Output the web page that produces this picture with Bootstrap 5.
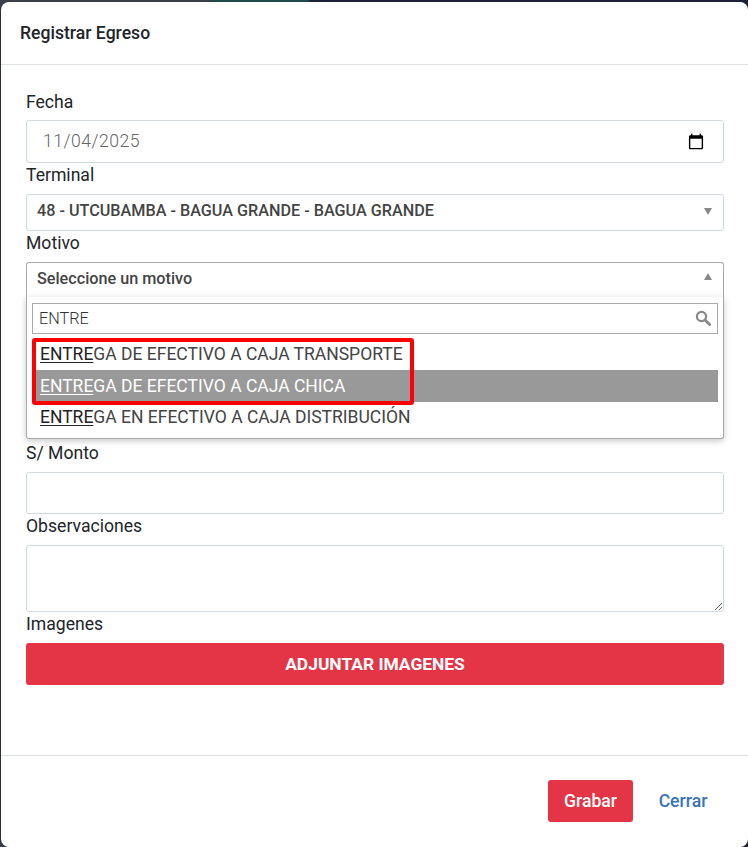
<!doctype html>
<html lang="es">
<head>
<meta charset="utf-8">
<title>Registrar Egreso</title>
<link href="https://cdn.jsdelivr.net/npm/bootstrap@5.3.0/dist/css/bootstrap.min.css" rel="stylesheet">
<style>
html,body{height:100%;}
body{background:linear-gradient(90deg,#3a3f47 0,#3a3f47 210px,#1f4a4c 212px,#1f4a4c 308px,#1c2238 310px);font-family:Roboto,"Liberation Sans",sans-serif;font-size:17.6px;color:#212529;overflow:hidden;}
.dlg{background:#fff;margin:2px 0 0 1px;height:845px;width:747px;border:0;border-radius:8px;box-shadow:-1px 0 0 #2b303b;}
.dlg-head{height:63px;border-bottom:1px solid #dee2e6;padding:0 19px;border-radius:0;}
.dlg-title{font-size:17.6px;line-height:1.5;font-weight:500;margin:0;color:#212529;}
.dlg-body{padding:25px 24px 0 25px;height:690px;flex:none;}
.lbl{display:block;font-size:17.6px;line-height:24px;margin-bottom:7px;color:#212529;}
.lbl.first{margin-bottom:6px;}
.fld{display:block;width:100%;height:42px;min-height:0;border:1px solid #ced9e0;border-radius:3px;padding:0 16px;font-size:17.6px;font-weight:300;line-height:1.5;color:#666;background:#fff;font-family:Roboto,sans-serif;}
.fld.tall{height:43px;letter-spacing:.5px;}
textarea.fld{height:67px;}
.sel{position:relative;height:37px;border:1px solid #ced9e0;border-radius:3px;padding:0 10px;font-size:16.2px;font-weight:500;line-height:31px;color:#444;background:#fff;}
.sel.opened{border-color:#aaa;border-bottom-color:transparent;border-radius:3px 3px 0 0;}
.tri{position:absolute;right:11px;top:13px;width:0;height:0;border-left:4.5px solid transparent;border-right:4.5px solid transparent;border-top:7px solid #888;}
.tri.up{top:10px;border-top:0;border-bottom:7px solid #888;}
.mot-wrap{position:relative;height:179px;}
.drop{position:absolute;left:0;right:0;top:35px;height:142px;background:#fff;border:1px solid #aaa;border-top:0;border-radius:0 0 3px 3px;box-shadow:0 2px 6px rgba(0,0,0,.22);padding:6px 5px 0 5px;z-index:2;}
.srch{position:relative;height:31px;border:1px solid #aaa;padding:0 6px;font-size:16.2px;font-weight:300;line-height:29px;color:#333;}
.srch svg{position:absolute;right:6px;top:6px;}
.res{margin:4px 0 0;padding:0;list-style:none;}
.res li{height:32px;line-height:32px;padding-left:8px;font-size:17.5px;color:#444;white-space:nowrap;}
.res li:last-child{line-height:30px;}
.res li u{color:#222;text-underline-offset:2px;}
.res li.hi{background:#999;color:#fff;}
.res li.hi u{color:#fff;}
.redbox{position:absolute;left:5px;top:41px;width:382px;height:67px;border:4px solid #f00;border-radius:3px;pointer-events:none;}
.btn-att{display:block;width:100%;height:42px;padding:0;background:#e43546;border:0;color:#fff;border-radius:3px;font-weight:700;font-size:17.4px;}
.dlg-foot{border-top:1px solid #dee2e6;flex:1;justify-content:flex-end;align-items:flex-start;padding:24px 24px 0 0;gap:9px;flex-wrap:nowrap;border-radius:0;--bs-modal-footer-gap:0;}
.dlg-foot>.btn{margin:0;}
.btn-gra{width:85px;height:42px;padding:0;background:#e43546;color:#fff;border:0;border-radius:3px;font-weight:500;font-size:17.6px;}
.btn-cer{width:82px;height:42px;padding:0;color:#3a73b9;border:0;font-weight:500;font-size:17.6px;text-decoration:none;}
</style>
</head>
<body>
<div class="modal-content dlg">
  <div class="modal-header dlg-head"><h5 class="modal-title dlg-title">Registrar Egreso</h5></div>
  <div class="modal-body dlg-body">
    <label class="form-label lbl first">Fecha</label>
    <input class="form-control fld tall" type="date" value="2025-11-04">
    <label class="form-label lbl">Terminal</label>
    <div class="sel">48 - UTCUBAMBA - BAGUA GRANDE - BAGUA GRANDE<span class="tri"></span></div>
    <label class="form-label lbl">Motivo</label>
    <div class="mot-wrap">
      <div class="sel opened">Seleccione un motivo<span class="tri up"></span></div>
      <div class="drop">
        <div class="srch">ENTRE
          <svg width="16" height="16" viewBox="0 0 16 16"><circle cx="6.5" cy="6.5" r="4.6" fill="none" stroke="#888" stroke-width="2.2"/><path d="M10 10l4.6 4.6" stroke="#888" stroke-width="2.8" stroke-linecap="round"/></svg>
        </div>
        <ul class="res">
          <li><u>ENTRE</u>GA DE EFECTIVO A CAJA TRANSPORTE</li>
          <li class="hi"><u>ENTRE</u>GA DE EFECTIVO A CAJA CHICA</li>
          <li><u>ENTRE</u>GA EN EFECTIVO A CAJA DISTRIBUCIÓN</li>
        </ul>
        <div class="redbox"></div>
      </div>
    </div>
    <label class="form-label lbl">S/ Monto</label>
    <input class="form-control fld" type="text">
    <label class="form-label lbl">Observaciones</label>
    <textarea class="form-control fld"></textarea>
    <label class="form-label lbl">Imagenes</label>
    <button class="btn btn-danger btn-att" type="button">ADJUNTAR IMAGENES</button>
  </div>
  <div class="modal-footer dlg-foot">
    <button class="btn btn-danger btn-gra" type="button">Grabar</button>
    <button class="btn btn-link btn-cer" type="button">Cerrar</button>
  </div>
</div>
<script src="https://cdn.jsdelivr.net/npm/bootstrap@5.3.0/dist/js/bootstrap.bundle.min.js"></script>
</body>
</html>
